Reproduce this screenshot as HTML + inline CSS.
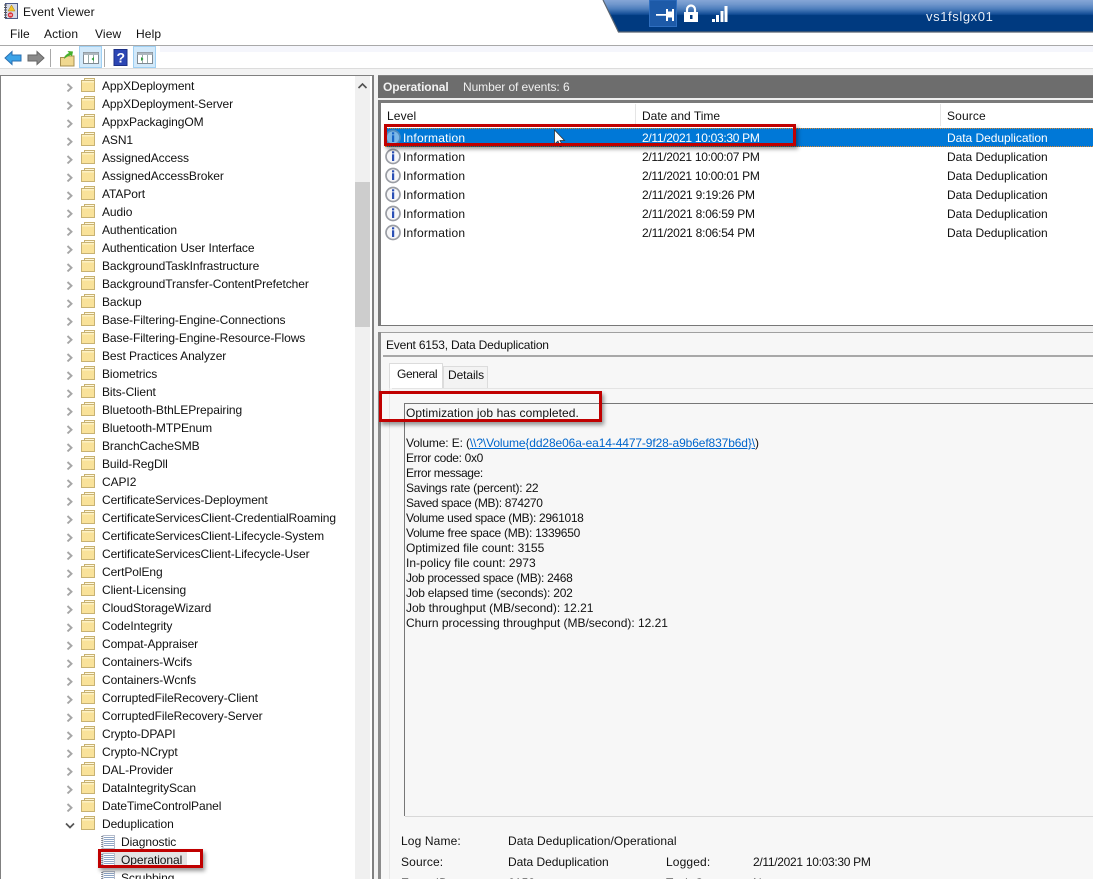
<!DOCTYPE html>
<html><head><meta charset="utf-8"><title>Event Viewer</title>
<style>
html,body{margin:0;padding:0;background:#fff}
#p{position:relative;width:1093px;height:879px;overflow:hidden;background:#fff;font:12px/15px "Liberation Sans",sans-serif;color:#111}
.a{position:absolute;white-space:nowrap}
.b{position:absolute}
.d{letter-spacing:-.3px}
.s{letter-spacing:-.04px}
#tree{position:absolute;left:0;top:77px;width:355px;height:802px;overflow:hidden}
.r{position:relative;height:18px;line-height:18px;padding-left:102px;white-space:nowrap;letter-spacing:-.08px}
.r svg{position:absolute;left:0;top:0}
.m{position:absolute;font-size:12px;letter-spacing:.13px;white-space:nowrap}
.red{position:absolute;border:3px solid #c00000;box-shadow:2px 3px 4px rgba(0,0,0,.4);box-sizing:border-box}
</style></head><body><div id="p">
<svg width="0" height="0" style="position:absolute"><defs>
<symbol id="f" viewBox="0 0 100 18"><path d="M67.500 7l4 3.700-4 3.700" fill="none" stroke="#a6a6a6" stroke-width="1.900"/><path d="M84.500 1.500h10v4h-10z" fill="#fff8dc" stroke="#c8b272"/><path d="M81.500 3.500h13v11h-13z" fill="#f9e29a" stroke="#c8b272"/><path d="M82 4h12v1.500H82z" fill="#fdf1c4"/></symbol>
<symbol id="fo" viewBox="0 0 100 18"><path d="M66 8.500l4 4 4-4" fill="none" stroke="#555" stroke-width="1.700"/><path d="M84.500 1.500h10v4h-10z" fill="#fff8dc" stroke="#c8b272"/><path d="M81.500 3.500h13v11h-13z" fill="#f9e29a" stroke="#c8b272"/><path d="M82 4h12v1.500H82z" fill="#fdf1c4"/></symbol>
<symbol id="l" viewBox="0 0 120 18"><rect x="103" y="2.500" width="11.500" height="13" fill="#fff" stroke="#b5bccb"/><path d="M102 3v12.500" stroke="#6f7480" stroke-width="1.500" stroke-dasharray="1 1"/><path d="M104 4.500h10M104 6.500h10M104 8.500h10M104 10.500h10M104 12.500h10" stroke="#8fa6c6"/></symbol>
<symbol id="i" viewBox="0 0 17 17"><circle cx="8" cy="8.500" r="7" fill="#f6f6f8" stroke="#9a9da4" stroke-width="1.700"/><rect x="7" y="3.300" width="2.200" height="2.100" fill="#2a4fb5"/><rect x="7" y="6.300" width="2.200" height="6.700" fill="#2a4fb5"/></symbol>
</defs></svg>

<!-- title -->
<svg class="b" style="left:3px;top:3px" width="16" height="17" viewBox="0 0 16 17"><rect x="2.500" y=".5" width="12" height="15" fill="#d5d9e6" stroke="#4c5a86"/><path d="M1 2h3M1 4.500h3M1 7h3M1 9.500h3M1 12h3M1 14.500h3" stroke="#555"/><path d="M8.500 2l3.500 6h-7z" fill="#f3c52a" stroke="#a57f10" stroke-width=".5"/><circle cx="7.500" cy="12" r="2.700" fill="#d8333b"/><rect x="6" y="11.500" width="3" height="1" fill="#fff"/></svg>
<div class="a" style="left:23px;top:5px;font-size:12px;letter-spacing:.1px">Event Viewer</div>
<div class="m" style="left:10px;top:27px">File</div>
<div class="m" style="left:44px;top:27px">Action</div>
<div class="m" style="left:95px;top:27px">View</div>
<div class="m" style="left:136px;top:27px">Help</div>

<!-- banner -->
<svg class="b" style="left:600px;top:0" width="493" height="34" viewBox="0 0 493 34">
<defs><linearGradient id="g" x1="0" y1="0" x2="0" y2="1"><stop offset="0" stop-color="#86a6d6"/><stop offset=".14" stop-color="#6f96cc"/><stop offset=".28" stop-color="#4d7ebc"/><stop offset=".45" stop-color="#114c95"/><stop offset=".48" stop-color="#003a80"/><stop offset="1" stop-color="#003a80"/></linearGradient></defs>
<path d="M3 0H493V32H18z" fill="url(#g)"/><path d="M3 0L18.500 32H493" fill="none" stroke="#5a6470" stroke-width="1.200"/>
<rect x="49.500" y="0" width="27" height="26.500" fill="#1d5aa8" stroke="#2f6fc0"/>
<path d="M56 14h10v1.700H56zM66 9h2v12h-2zM68 11.500h4v6h-4zM72 9h2v12h-2z" fill="#fff"/>
<path d="M87 13V9.500a4 4 0 0 1 8 0V13" fill="none" stroke="#fff" stroke-width="2.200"/><rect x="84" y="12" width="14" height="10" fill="#fff"/><rect x="90" y="15" width="2.500" height="4" fill="#003a80"/>
<path d="M112 19h3v3h-3zM116 15h3v7h-3zM120.500 11h3v11h-3zM124.500 6h3v16h-3z" fill="#fff"/>
<text x="326" y="21" font-family="Liberation Sans,sans-serif" font-size="13" letter-spacing=".6" fill="#e8eef7">vs1fslgx01</text>
</svg>

<!-- toolbar -->
<div class="b" style="left:0;top:45px;width:1093px;height:1px;background:#a9a9a9"></div>
<div class="b" style="left:160px;top:46px;width:933px;height:6px;background:#f5f6fc"></div>
<svg class="b" style="left:0;top:46px" width="160" height="23" viewBox="0 0 160 23">
<path d="M5 12l7-6.500v3.500h9v6h-9v3.500z" fill="#3ba3e8" stroke="#2a6fb0"/>
<path d="M44 12l-7-6.500v3.500h-9v6h9v3.500z" fill="#8a8a8a" stroke="#666"/>
<rect x="50" y="3" width="1" height="18" fill="#a8a8a8"/>
<path d="M60.500 11.500h4l1-1.500h8.500v10h-13.500z" fill="#f0d890" stroke="#a89050"/>
<path d="M64 13c1-4 3-5 5-6l-1.500-2l5.500.5l-1 5l-1.500-1.500c-2 1-4 2-6.500 4z" fill="#45b02c"/>
<rect x="79.500" y=".5" width="22" height="21" fill="#d2e9fa" stroke="#9fd0f3"/>
<rect x="83.500" y="6.500" width="15" height="11" fill="#fff" stroke="#7f8a92"/><rect x="83.500" y="6.500" width="15" height="2.500" fill="#aeb7be"/><path d="M88.500 9v8M93.500 9v8" stroke="#9aa"/><path d="M94 11v4l-2.500-2z" fill="#2f9f3a"/>
<rect x="104" y="3" width="1" height="18" fill="#a8a8a8"/>
<rect x="114" y="3.500" width="13" height="16" fill="#2c46b4" stroke="#1b2f86"/><text x="116.500" y="16.500" font-family="Liberation Sans,sans-serif" font-size="14" font-weight="bold" fill="#fff">?</text>
<rect x="133.500" y=".5" width="22" height="21" fill="#d2e9fa" stroke="#9fd0f3"/>
<rect x="137.500" y="6.500" width="15" height="11" fill="#fff" stroke="#7f8a92"/><rect x="137.500" y="6.500" width="15" height="2.500" fill="#aeb7be"/><path d="M142.500 9v8M147.500 9v8" stroke="#9aa"/><path d="M141 11v4l2.500-2z" fill="#2f9f3a"/>
</svg>
<div class="b" style="left:0;top:68px;width:1093px;height:1px;background:#dcdcdc"></div>
<div class="b" style="left:0;top:69px;width:1093px;height:6px;background:#f3f3f3"></div>

<!-- left pane frame -->
<div class="b" style="left:0;top:75px;width:372px;height:1px;background:#808080"></div>
<div class="b" style="left:0;top:75px;width:1px;height:804px;background:#808080"></div>
<div class="b" style="left:355px;top:76px;width:15px;height:803px;background:#f0f0f0"></div>
<div class="b" style="left:355px;top:182px;width:15px;height:145px;background:#cdcdcd"></div>
<svg class="b" style="left:355px;top:80px" width="15" height="12"><path d="M3.500 8l4-4 4 4" fill="none" stroke="#505050" stroke-width="1.600"/></svg>
<div class="b" style="left:372px;top:75px;width:2px;height:804px;background:#808080"></div>
<div class="b" style="left:374px;top:75px;width:4px;height:804px;background:#f3f3f3"></div>

<div id="tree">
<div class="r"><svg width="100" height="18"><use href="#f"/></svg>AppXDeployment</div>
<div class="r"><svg width="100" height="18"><use href="#f"/></svg>AppXDeployment-Server</div>
<div class="r"><svg width="100" height="18"><use href="#f"/></svg>AppxPackagingOM</div>
<div class="r"><svg width="100" height="18"><use href="#f"/></svg>ASN1</div>
<div class="r"><svg width="100" height="18"><use href="#f"/></svg>AssignedAccess</div>
<div class="r"><svg width="100" height="18"><use href="#f"/></svg>AssignedAccessBroker</div>
<div class="r"><svg width="100" height="18"><use href="#f"/></svg>ATAPort</div>
<div class="r"><svg width="100" height="18"><use href="#f"/></svg>Audio</div>
<div class="r"><svg width="100" height="18"><use href="#f"/></svg>Authentication</div>
<div class="r"><svg width="100" height="18"><use href="#f"/></svg>Authentication User Interface</div>
<div class="r"><svg width="100" height="18"><use href="#f"/></svg>BackgroundTaskInfrastructure</div>
<div class="r"><svg width="100" height="18"><use href="#f"/></svg>BackgroundTransfer-ContentPrefetcher</div>
<div class="r"><svg width="100" height="18"><use href="#f"/></svg>Backup</div>
<div class="r"><svg width="100" height="18"><use href="#f"/></svg>Base-Filtering-Engine-Connections</div>
<div class="r"><svg width="100" height="18"><use href="#f"/></svg>Base-Filtering-Engine-Resource-Flows</div>
<div class="r"><svg width="100" height="18"><use href="#f"/></svg>Best Practices Analyzer</div>
<div class="r"><svg width="100" height="18"><use href="#f"/></svg>Biometrics</div>
<div class="r"><svg width="100" height="18"><use href="#f"/></svg>Bits-Client</div>
<div class="r"><svg width="100" height="18"><use href="#f"/></svg>Bluetooth-BthLEPrepairing</div>
<div class="r"><svg width="100" height="18"><use href="#f"/></svg>Bluetooth-MTPEnum</div>
<div class="r"><svg width="100" height="18"><use href="#f"/></svg>BranchCacheSMB</div>
<div class="r"><svg width="100" height="18"><use href="#f"/></svg>Build-RegDll</div>
<div class="r"><svg width="100" height="18"><use href="#f"/></svg>CAPI2</div>
<div class="r"><svg width="100" height="18"><use href="#f"/></svg>CertificateServices-Deployment</div>
<div class="r"><svg width="100" height="18"><use href="#f"/></svg>CertificateServicesClient-CredentialRoaming</div>
<div class="r"><svg width="100" height="18"><use href="#f"/></svg>CertificateServicesClient-Lifecycle-System</div>
<div class="r"><svg width="100" height="18"><use href="#f"/></svg>CertificateServicesClient-Lifecycle-User</div>
<div class="r"><svg width="100" height="18"><use href="#f"/></svg>CertPolEng</div>
<div class="r"><svg width="100" height="18"><use href="#f"/></svg>Client-Licensing</div>
<div class="r"><svg width="100" height="18"><use href="#f"/></svg>CloudStorageWizard</div>
<div class="r"><svg width="100" height="18"><use href="#f"/></svg>CodeIntegrity</div>
<div class="r"><svg width="100" height="18"><use href="#f"/></svg>Compat-Appraiser</div>
<div class="r"><svg width="100" height="18"><use href="#f"/></svg>Containers-Wcifs</div>
<div class="r"><svg width="100" height="18"><use href="#f"/></svg>Containers-Wcnfs</div>
<div class="r"><svg width="100" height="18"><use href="#f"/></svg>CorruptedFileRecovery-Client</div>
<div class="r"><svg width="100" height="18"><use href="#f"/></svg>CorruptedFileRecovery-Server</div>
<div class="r"><svg width="100" height="18"><use href="#f"/></svg>Crypto-DPAPI</div>
<div class="r"><svg width="100" height="18"><use href="#f"/></svg>Crypto-NCrypt</div>
<div class="r"><svg width="100" height="18"><use href="#f"/></svg>DAL-Provider</div>
<div class="r"><svg width="100" height="18"><use href="#f"/></svg>DataIntegrityScan</div>
<div class="r"><svg width="100" height="18"><use href="#f"/></svg>DateTimeControlPanel</div>
<div class="r"><svg width="100" height="18"><use href="#fo"/></svg>Deduplication</div>
<div class="r" style="padding-left:121px"><svg width="120" height="18"><use href="#l"/></svg>Diagnostic</div>
<div class="r" style="padding-left:121px"><span class="b" style="left:101px;top:1px;width:86px;height:16px;background:#e4e4e4"></span><svg width="120" height="18"><use href="#l"/></svg><span style="position:relative">Operational</span></div>
<div class="r" style="padding-left:121px"><svg width="120" height="18"><use href="#l"/></svg>Scrubbing</div>
</div>

<!-- right header -->
<div class="b" style="left:378px;top:75px;width:715px;height:1px;background:#808080"></div>
<div class="b" style="left:378px;top:76px;width:715px;height:22px;background:#6d6d6d"></div>
<div class="a" style="left:383px;top:80px;color:#f2f2f2;font-weight:bold;letter-spacing:-.1px">Operational</div>
<div class="a" style="left:463px;top:80px;color:#f0f0f0;letter-spacing:-.08px">Number of events: 6</div>
<div class="b" style="left:378px;top:98px;width:715px;height:2px;background:#eee"></div>
<div class="b" style="left:378px;top:100px;width:715px;height:3px;background:#7a7a7a"></div>
<div class="b" style="left:378px;top:100px;width:3px;height:226px;background:#7a7a7a"></div>

<!-- list -->
<div class="b" style="left:381px;top:103px;width:712px;height:222px;background:#fff"></div>
<div class="b" style="left:635px;top:104px;width:1px;height:22px;background:#e5e5e5"></div>
<div class="b" style="left:940px;top:104px;width:1px;height:22px;background:#e5e5e5"></div>
<div class="a" style="left:387px;top:109px;letter-spacing:.13px">Level</div>
<div class="a" style="left:642px;top:109px">Date and Time</div>
<div class="a" style="left:947px;top:109px;letter-spacing:.13px">Source</div>

<div class="b" style="left:385px;top:128px;width:708px;height:19px;background:#0078d7;border-top:1px dotted #e08a30;border-bottom:1px dotted #e08a30;box-sizing:border-box"></div>
<svg class="b" style="left:385px;top:129px" width="17" height="17"><use href="#i"/></svg>
<div class="b" style="left:385px;top:129px;width:17px;height:17px;background:rgba(0,120,215,.5)"></div>
<svg class="b" style="left:385px;top:148px" width="17" height="17"><use href="#i"/></svg>
<svg class="b" style="left:385px;top:167px" width="17" height="17"><use href="#i"/></svg>
<svg class="b" style="left:385px;top:186px" width="17" height="17"><use href="#i"/></svg>
<svg class="b" style="left:385px;top:205px" width="17" height="17"><use href="#i"/></svg>
<svg class="b" style="left:385px;top:224px" width="17" height="17"><use href="#i"/></svg>

<div class="a" style="left:403px;top:131px;color:#fff;letter-spacing:.2px">Information</div>
<div class="a d" style="left:642px;top:131px;color:#fff">2/11/2021 10:03:30 PM</div>
<div class="a s" style="left:947px;top:131px;color:#fff">Data Deduplication</div>
<div class="a" style="left:403px;top:150px;letter-spacing:.2px">Information</div>
<div class="a d" style="left:642px;top:150px">2/11/2021 10:00:07 PM</div>
<div class="a s" style="left:947px;top:150px">Data Deduplication</div>
<div class="a" style="left:403px;top:169px;letter-spacing:.2px">Information</div>
<div class="a d" style="left:642px;top:169px">2/11/2021 10:00:01 PM</div>
<div class="a s" style="left:947px;top:169px">Data Deduplication</div>
<div class="a" style="left:403px;top:188px;letter-spacing:.2px">Information</div>
<div class="a" style="left:642px;top:188px;letter-spacing:-.22px">2/11/2021 9:19:26 PM</div>
<div class="a s" style="left:947px;top:188px">Data Deduplication</div>
<div class="a" style="left:403px;top:207px;letter-spacing:.2px">Information</div>
<div class="a" style="left:642px;top:207px;letter-spacing:-.22px">2/11/2021 8:06:59 PM</div>
<div class="a s" style="left:947px;top:207px">Data Deduplication</div>
<div class="a" style="left:403px;top:226px;letter-spacing:.2px">Information</div>
<div class="a" style="left:642px;top:226px;letter-spacing:-.22px">2/11/2021 8:06:54 PM</div>
<div class="a s" style="left:947px;top:226px">Data Deduplication</div>

<svg class="b" style="left:553px;top:129px" width="14" height="20"><path d="M1.500 1v14l3.500-3 2.500 5.500 2-1-2.500-5h4.500z" fill="#fff" stroke="#333" stroke-width=".8"/></svg>

<!-- detail -->
<div class="b" style="left:378px;top:325px;width:715px;height:1px;background:#777"></div>
<div class="b" style="left:378px;top:326px;width:715px;height:6px;background:#f0f0f0"></div>
<div class="b" style="left:378px;top:332px;width:3px;height:547px;background:#8c8c8c"></div>
<div class="b" style="left:381px;top:332px;width:712px;height:547px;background:#f7f7f7;border-top:1px solid #a0a0a0;box-sizing:border-box"></div>
<div class="a" style="left:386px;top:338px;letter-spacing:-.2px">Event 6153, Data Deduplication</div>
<div class="b" style="left:383px;top:355px;width:710px;height:2px;background:#a8a8a8"></div>
<div class="b" style="left:389px;top:388px;width:1px;height:491px;background:#e6e6e6"></div>
<div class="b" style="left:389px;top:363px;width:54px;height:25px;background:#fff;border:1px solid #dcdcdc;border-bottom:0;box-sizing:border-box"></div>
<div class="b" style="left:443px;top:366px;width:45px;height:22px;background:#f3f3f3;border:1px solid #dcdcdc;border-bottom:0;box-sizing:border-box"></div>
<div class="a" style="left:397px;top:367px;letter-spacing:-.35px">General</div>
<div class="a" style="left:448px;top:368px;letter-spacing:-.1px">Details</div>
<div class="b" style="left:392px;top:388px;width:701px;height:1px;background:#e4e4e4"></div>
<div class="b" style="left:404px;top:403px;width:689px;height:1px;background:#777"></div>
<div class="b" style="left:404px;top:403px;width:1px;height:413px;background:#777"></div>
<div class="b" style="left:405px;top:816px;width:688px;height:1px;background:#d8d8d8"></div>

<div class="a" style="left:406px;top:406px;letter-spacing:.07px">Optimization job has completed.</div>
<div class="a" style="left:406px;top:436px;letter-spacing:-.12px">Volume: E: (<span style="color:#0066cc;text-decoration:underline">\\?\Volume{dd28e06a-ea14-4477-9f28-a9b6ef837b6d}\</span>)</div>
<div class="a" style="left:406px;top:451px;letter-spacing:-.34px">Error code: 0x0</div>
<div class="a" style="left:406px;top:466px;letter-spacing:-.37px">Error message:</div>
<div class="a" style="left:406px;top:481px;letter-spacing:-.22px">Savings rate (percent): 22</div>
<div class="a" style="left:406px;top:496px;letter-spacing:-.37px">Saved space (MB): 874270</div>
<div class="a" style="left:406px;top:511px;letter-spacing:-.32px">Volume used space (MB): 2961018</div>
<div class="a" style="left:406px;top:526px;letter-spacing:-.26px">Volume free space (MB): 1339650</div>
<div class="a" style="left:406px;top:541px;letter-spacing:-.02px">Optimized file count: 3155</div>
<div class="a" style="left:406px;top:556px;letter-spacing:.01px">In-policy file count: 2973</div>
<div class="a" style="left:406px;top:571px;letter-spacing:-.32px">Job processed space (MB): 2468</div>
<div class="a" style="left:406px;top:586px;letter-spacing:-.22px">Job elapsed time (seconds): 202</div>
<div class="a" style="left:406px;top:601px;letter-spacing:-.02px">Job throughput (MB/second): 12.21</div>
<div class="a" style="left:406px;top:616px;letter-spacing:-.02px">Churn processing throughput (MB/second): 12.21</div>

<div class="a" style="left:401px;top:834px;letter-spacing:.13px">Log Name:</div>
<div class="a" style="left:508px;top:834px;letter-spacing:.06px">Data Deduplication/Operational</div>
<div class="a" style="left:401px;top:855px;letter-spacing:.13px">Source:</div>
<div class="a s" style="left:508px;top:855px">Data Deduplication</div>
<div class="a" style="left:666px;top:855px;letter-spacing:.13px">Logged:</div>
<div class="a d" style="left:753px;top:855px">2/11/2021 10:03:30 PM</div>
<div class="a" style="left:401px;top:876px;letter-spacing:.13px">Event ID:</div>
<div class="a" style="left:508px;top:876px;letter-spacing:.13px">6153</div>
<div class="a" style="left:666px;top:876px;letter-spacing:.13px">Task Category:</div>
<div class="a" style="left:753px;top:876px;letter-spacing:.13px">None</div>

<!-- red annotations -->
<div class="red" style="left:384px;top:124px;width:412px;height:22px"></div>
<div class="red" style="left:379px;top:391px;width:223px;height:31px"></div>
<div class="red" style="left:98px;top:849px;width:105px;height:19px"></div>
</div></body></html>
